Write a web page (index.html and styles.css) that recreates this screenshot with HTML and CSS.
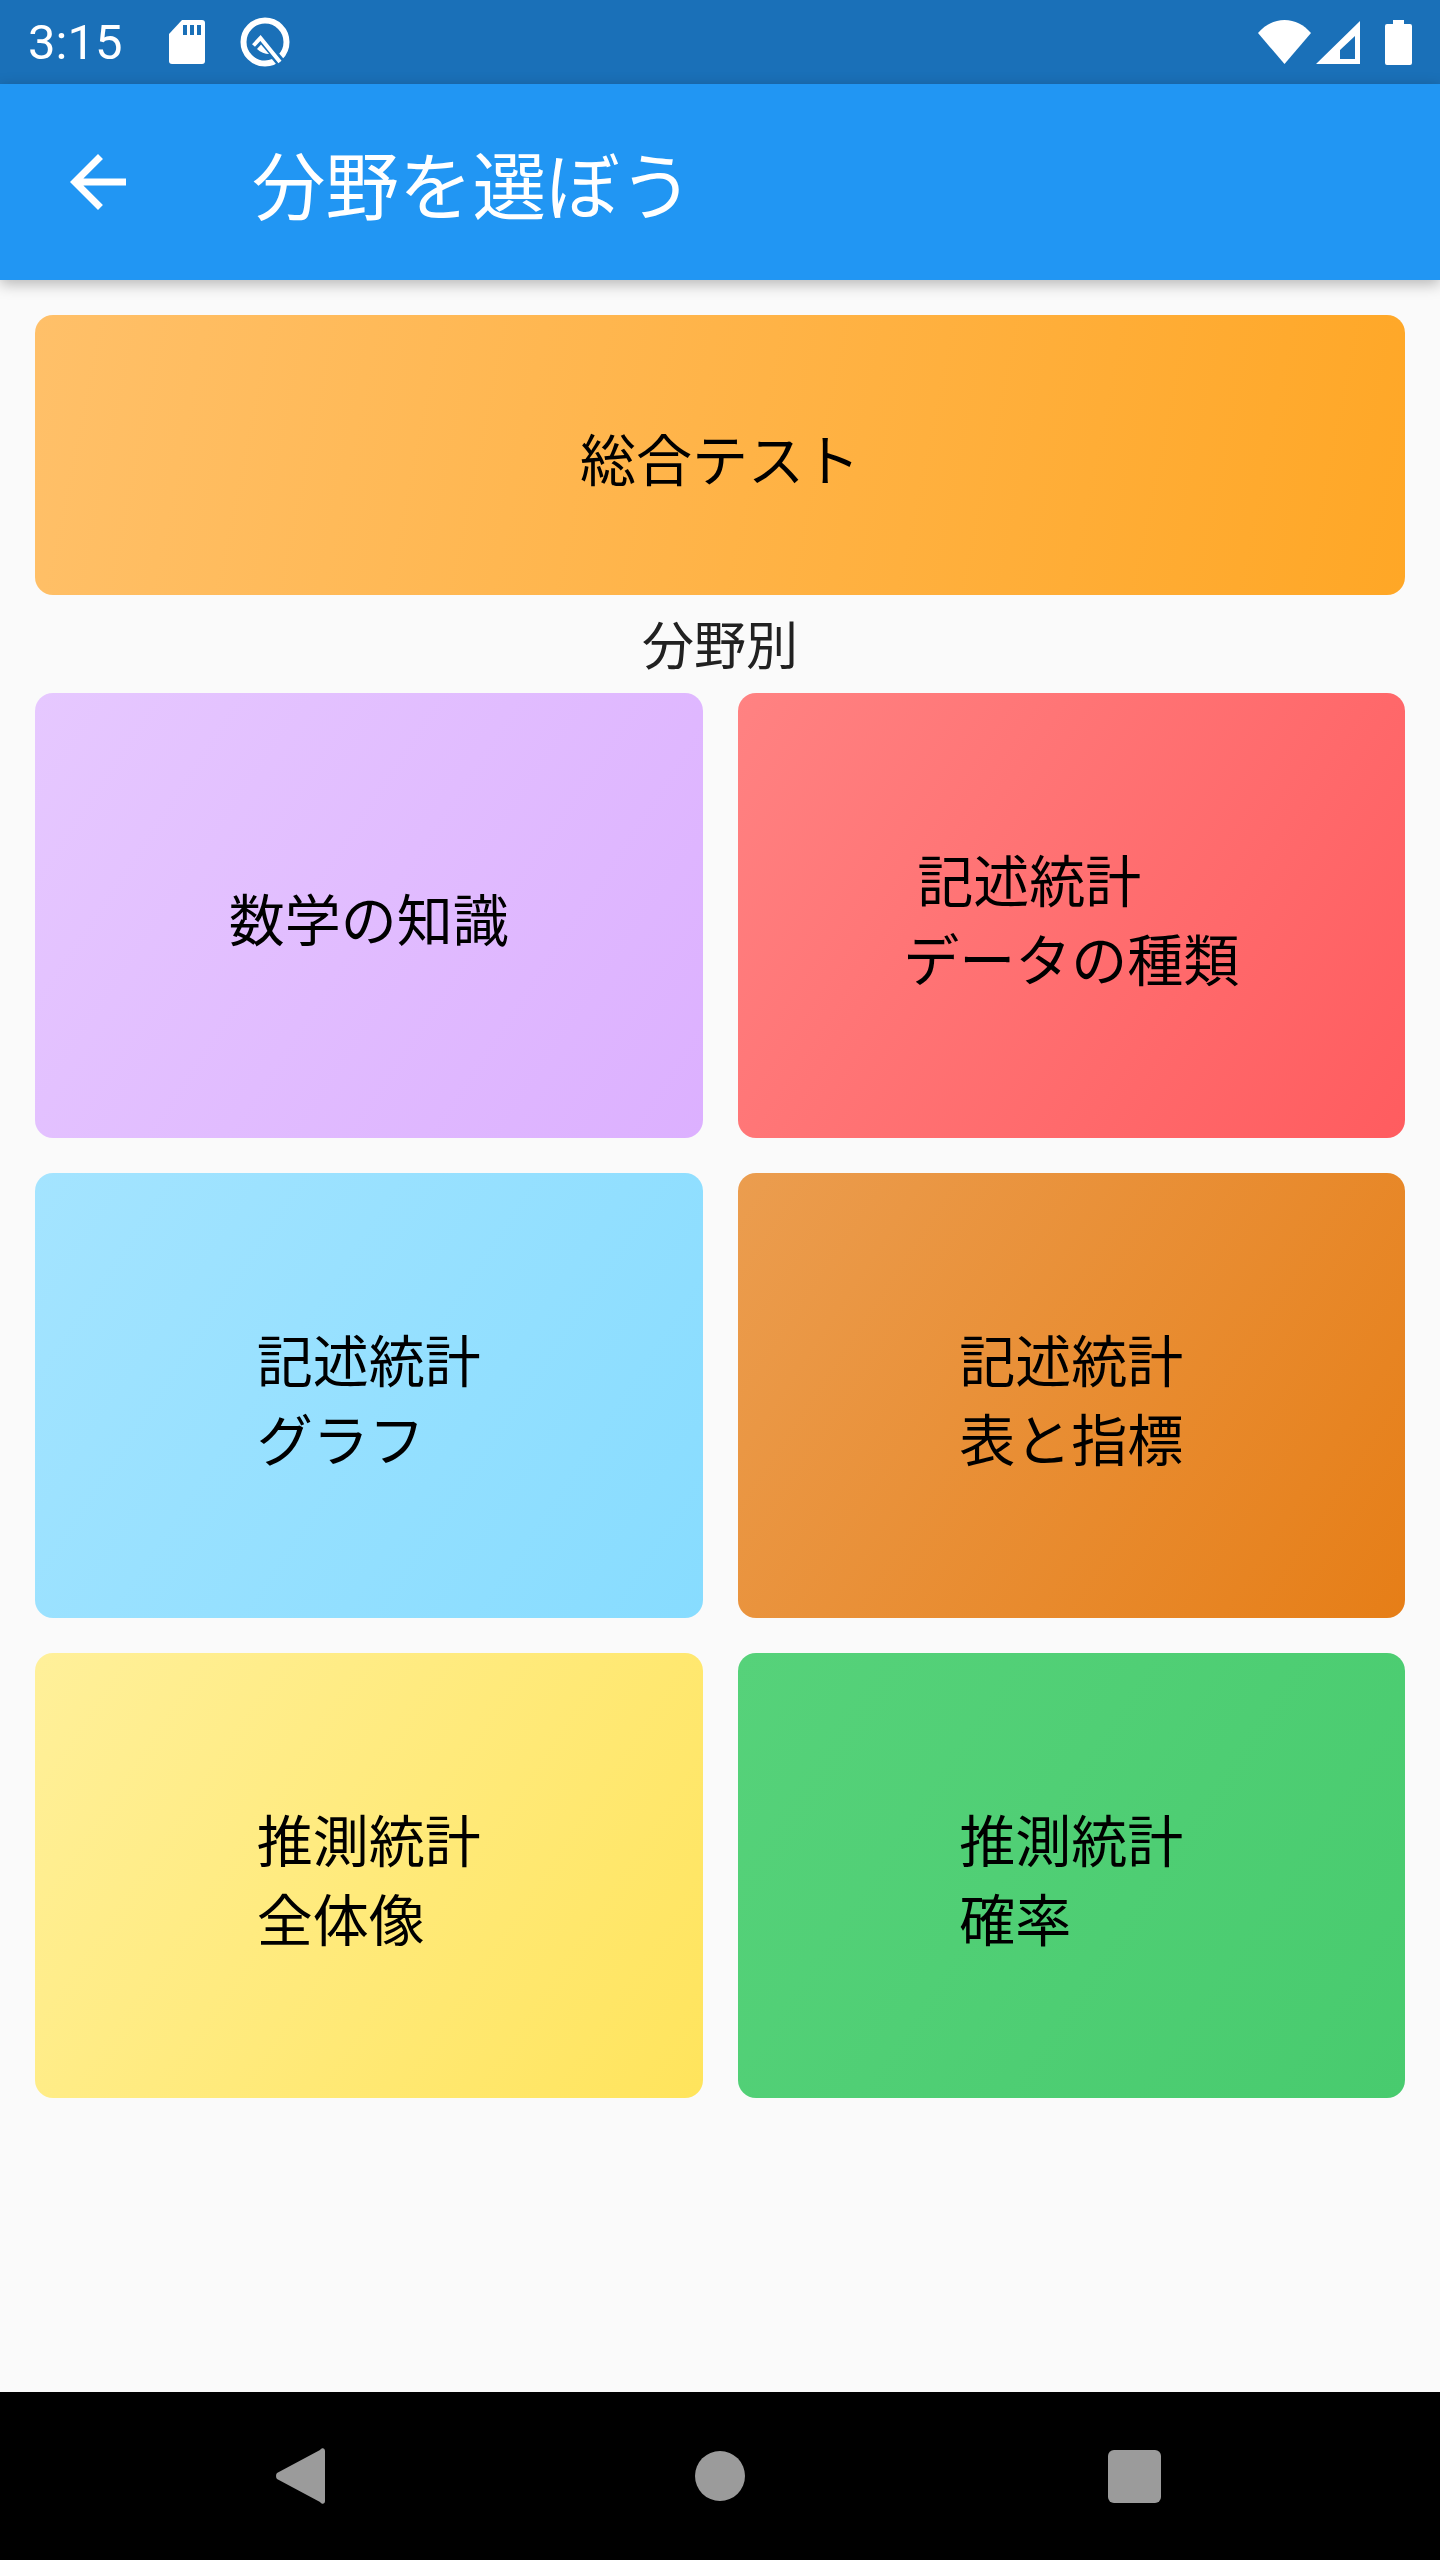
FILE: index.html
```html
<!DOCTYPE html>
<html lang="ja">
<head>
    <meta charset="UTF-8">
    <meta name="viewport" content="width=device-width, initial-scale=1.0">
    <title>分野を選ぼう</title>
    <link rel="stylesheet" href="styles.css">
</head>
<body>
    <div class="status-bar">
        <span class="clock">3:15</span>
        <svg class="icon-sd" viewBox="0 0 36 44" aria-hidden="true">
            <path fill="#fff" d="M13 0H33a3 3 0 0 1 3 3V41a3 3 0 0 1-3 3H3a3 3 0 0 1-3-3V14Z"/>
            <path fill="#1a70b8" d="M14 5h4v10h-4zM21 5h4v10h-4zM28 5h4v10h-4z"/>
        </svg>
        <svg class="icon-q" viewBox="0 0 50 50" aria-hidden="true">
            <circle cx="25" cy="25" r="21.5" fill="none" stroke="#fff" stroke-width="6"/>
            <path d="M32 35 42 47" fill="none" stroke="#1a70b8" stroke-width="9"/>
            <path d="M13.5 28.5 20.5 21 40 45" fill="none" stroke="#fff" stroke-width="4"/>
            <path fill="#fff" d="M17 32 21 27.5 29 37C25 37 20.5 35.5 17 32Z"/>
        </svg>
        <span class="status-gap"></span>
        <svg class="icon-wifi" viewBox="0 0 53 44" aria-hidden="true">
            <path fill="#fff" d="M26.5 44 0 13C7 5 16 0 26.5 0S46 5 53 13Z"/>
        </svg>
        <svg class="icon-signal" viewBox="0 0 44 43" aria-hidden="true">
            <path fill="#fff" fill-rule="evenodd" d="M44 0V43H0ZM39 38V15L24 29V38Z"/>
        </svg>
        <svg class="icon-battery" viewBox="0 0 27 45" aria-hidden="true">
            <path fill="#fff" d="M8 0H19V4H25a2 2 0 0 1 2 2V43a2 2 0 0 1-2 2H2a2 2 0 0 1-2-2V6a2 2 0 0 1 2-2H8Z"/>
        </svg>
    </div>
    <header class="app-bar">
        <svg class="back-icon" viewBox="0 0 24 24" aria-label="戻る">
            <path fill="#fff" d="M20 11H7.83l5.59-5.59L12 4l-8 8 8 8 1.41-1.41L7.83 13H20v-2z"/>
        </svg>
        <h1>分野を選ぼう</h1>
    </header>
    <main class="content">
        <button class="card card-overall">総合テスト</button>
        <p class="section-label">分野別</p>
        <div class="card-grid">
            <button class="card card-math">数学の知識</button>
            <button class="card card-red"><span class="indented">記述統計<br>データの種類</span></button>
            <button class="card card-blue"><span>記述統計<br>グラフ</span></button>
            <button class="card card-brown"><span>記述統計<br>表と指標</span></button>
            <button class="card card-yellow"><span>推測統計<br>全体像</span></button>
            <button class="card card-green"><span>推測統計<br>確率</span></button>
        </div>
    </main>
    <nav class="nav-bar">
        <svg class="nav-back" viewBox="0 0 49 56" aria-hidden="true">
            <path fill="#9b9b9b" d="M49 3V53C49 56 46 57 44 54L1 31C-0.3 29.5-0.3 26.5 1 25L44 2C46-1 49 0 49 3Z"/>
        </svg>
        <span class="nav-home"></span>
        <span class="nav-recent"></span>
    </nav>
</body>
</html>
```

FILE: styles.css
```css
html, body {
    margin: 0;
    padding: 0;
}
body {
    width: 1440px;
    height: 2560px;
    display: flex;
    flex-direction: column;
    background-color: #fafafa;
    font-family: "Noto Sans CJK JP", "Noto Sans", sans-serif;
    color: #000;
    overflow: hidden;
}
.status-bar {
    height: 84px;
    flex-shrink: 0;
    display: flex;
    align-items: center;
    background-color: #1a70b8;
    padding: 0 28px;
    box-sizing: border-box;
}
.clock {
    font-family: Roboto, sans-serif;
    font-size: 49px;
    color: #fff;
    width: 141px;
}
.icon-sd {
    width: 36px;
    height: 44px;
    margin-right: 35px;
}
.icon-q {
    width: 50px;
    height: 50px;
}
.status-gap {
    flex-grow: 1;
}
.icon-wifi {
    width: 53px;
    height: 44px;
    margin-right: 5px;
}
.icon-signal {
    width: 44px;
    height: 43px;
    margin-right: 25px;
}
.icon-battery {
    width: 27px;
    height: 45px;
}
.app-bar {
    height: 196px;
    flex-shrink: 0;
    display: flex;
    align-items: center;
    background-color: #2196f3;
    box-shadow: 0 4px 14px rgba(0, 0, 0, 0.28);
    position: relative;
}
.back-icon {
    width: 84px;
    height: 84px;
    margin-left: 56px;
    margin-right: 112px;
}
.app-bar h1 {
    margin: 0;
    font-size: 73.5px;
    font-weight: 400;
    color: #fff;
}
.content {
    flex-grow: 1;
    padding: 35px 35px 0;
}
.card {
    display: flex;
    align-items: center;
    justify-content: center;
    width: 100%;
    border: none;
    border-radius: 18px;
    padding: 2px 0 0;
    font-family: inherit;
    font-size: 56px;
    line-height: 79px;
    color: #000;
    text-align: left;
    white-space: nowrap;
}
.indented {
    text-indent: 14px;
}
.card-overall {
    height: 280px;
    background: linear-gradient(101.5deg, #ffc069, #ffa726);
}
.section-label {
    margin: 0;
    height: 98px;
    line-height: 96px;
    font-size: 52px;
    text-align: center;
    color: #212121;
}
.card-grid {
    display: grid;
    grid-template-columns: 1fr 1fr;
    grid-auto-rows: 445px;
    gap: 35px;
}
.card-math {
    background: linear-gradient(123.7deg, #e6c8ff, #dcb0ff);
}
.card-red {
    background: linear-gradient(123.7deg, #ff8282, #ff5c5f);
}
.card-blue {
    background: linear-gradient(123.7deg, #a4e4ff, #87dcff);
}
.card-brown {
    background: linear-gradient(123.7deg, #eb9d4f, #e67e17);
}
.card-yellow {
    background: linear-gradient(123.7deg, #fff09a, #ffe45c);
}
.card-green {
    background: linear-gradient(123.7deg, #56d27a, #48cb6e);
}
.nav-bar {
    height: 168px;
    flex-shrink: 0;
    display: flex;
    align-items: center;
    background-color: #000;
    padding-left: 276px;
}
.nav-back {
    width: 49px;
    height: 56px;
    margin-right: 370px;
}
.nav-home {
    width: 50px;
    height: 50px;
    border-radius: 50%;
    background-color: #9b9b9b;
    margin-right: 363px;
}
.nav-recent {
    width: 53px;
    height: 53px;
    border-radius: 6px;
    background-color: #9b9b9b;
}
```
